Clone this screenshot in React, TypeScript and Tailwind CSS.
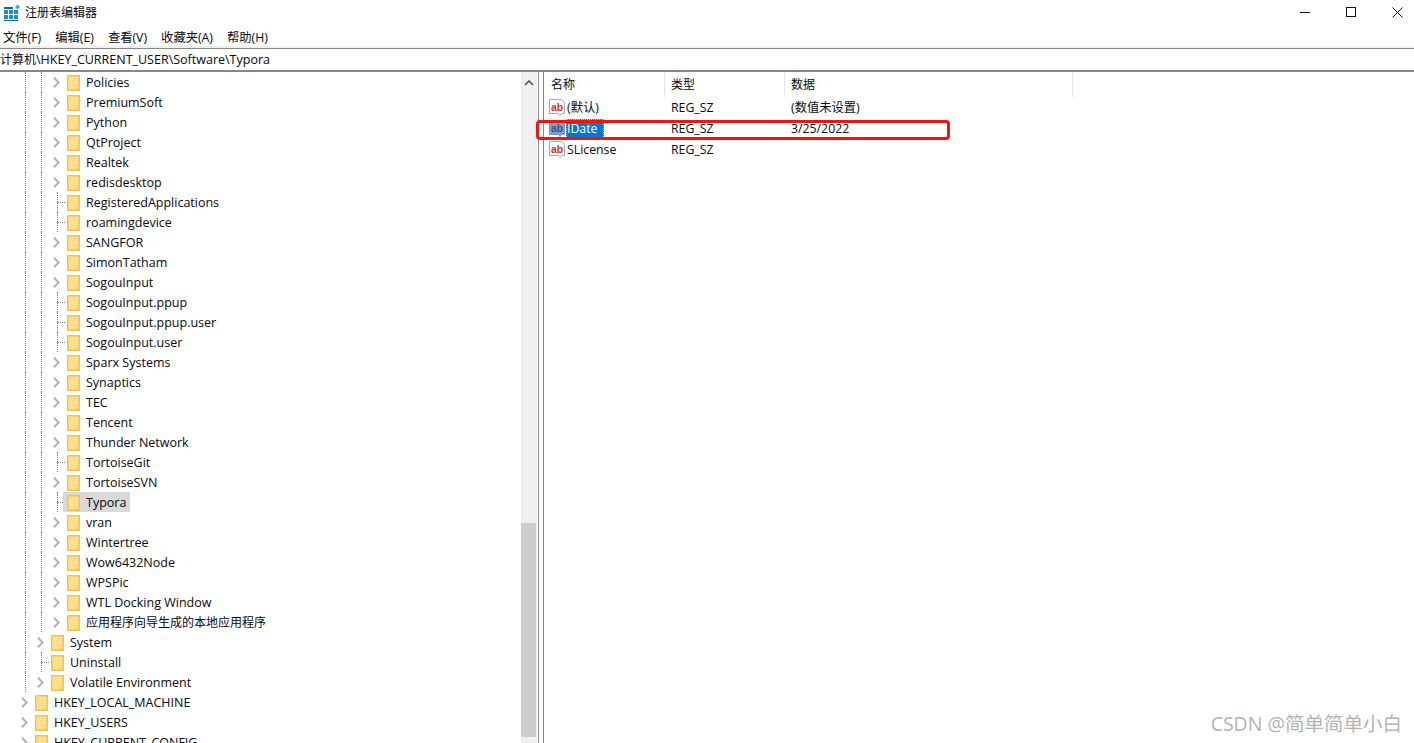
interface TreeRow {
  name: string;
  depth: number;
  leaf?: boolean;
  selected?: boolean;
  last?: boolean;
}

const level3 = [
  'Policies', 'PremiumSoft', 'Python', 'QtProject', 'Realtek', 'redisdesktop',
  '*RegisteredApplications', '*roamingdevice', 'SANGFOR', 'SimonTatham', 'SogouInput',
  '*SogouInput.ppup', '*SogouInput.ppup.user', '*SogouInput.user', 'Sparx Systems',
  'Synaptics', 'TEC', 'Tencent', 'Thunder Network', '*TortoiseGit', 'TortoiseSVN',
  '*Typora', 'vran', 'Wintertree', 'Wow6432Node', 'WPSPic', 'WTL Docking Window',
  '应用程序向导生成的本地应用程序',
];

const rows: TreeRow[] = [
  ...level3.map((n) => ({
    name: n.replace('*', ''),
    depth: 2,
    leaf: n.startsWith('*'),
    selected: n === '*Typora',
    last: n === '应用程序向导生成的本地应用程序',
  })),
  { name: 'System', depth: 1 },
  { name: 'Uninstall', depth: 1, leaf: true },
  { name: 'Volatile Environment', depth: 1, last: true },
  { name: 'HKEY_LOCAL_MACHINE', depth: 0 },
  { name: 'HKEY_USERS', depth: 0 },
  { name: 'HKEY_CURRENT_CONFIG', depth: 0 },
];

const values = [
  { name: '(默认)', type: 'REG_SZ', data: '(数值未设置)' },
  { name: 'IDate', type: 'REG_SZ', data: '3/25/2022', selected: true },
  { name: 'SLicense', type: 'REG_SZ', data: '' },
];

const menus = ['文件(F)', '编辑(E)', '查看(V)', '收藏夹(A)', '帮助(H)'];

function Folder() {
  return (
    <svg width="13" height="16" viewBox="0 0 13 16" className="shrink-0 mt-[2px]">
      <rect x="0.75" y="0.75" width="11.5" height="14.5" fill="#fee08c" stroke="#f0c24e" strokeWidth="1.5" />
      <path d="M10 15v-4h2.5" fill="#fff0c0" stroke="#f0c24e" />
    </svg>
  );
}

function Chevron() {
  return (
    <svg width="7" height="11" viewBox="0 0 7 11">
      <path d="M1 0.8l4.7 4.7-4.7 4.7" fill="none" stroke="#b0b0b0" strokeWidth="2" />
    </svg>
  );
}

function AppIcon() {
  return (
    <svg width="18" height="18" viewBox="0 0 18 18">
      <path d="M1 6h4v4H1zM6 6h4v4H6zM11 6h4v4h-4zM1 11h4v4H1zM6 11h4v4H6zM11 11h4v4h-4z" fill="#1b8fc9" />
      <path d="M1 16h14v1H1zM1 3h9v2H1z" fill="#156a9c" />
      <path d="M14.5 0.5l2.5 2.5-2.5 2.5-2.5-2.5z" fill="#39a9e0" />
    </svg>
  );
}

function AbIcon({ selected }: { selected?: boolean }) {
  const edge = selected ? '#7b98c4' : '#a8a8a8';
  const fill = selected ? '#7f9fd2' : '#ffffff';
  const ink = selected ? '#3f5680' : '#d8321a';
  return (
    <div className="relative w-4 h-[18px] shrink-0">
      <svg width="16" height="18" viewBox="0 0 16 18">
        <path d="M0.5 0.5h12l3 3v11h-3l-1.5 2-1.5-2h-9z" fill={fill} stroke={edge} />
      </svg>
      <span
        className="absolute left-[2px] top-[1px] text-[10.5px] leading-[14px] font-bold font-['Liberation_Sans',sans-serif]"
        style={{ color: ink }}
      >
        ab
      </span>
    </div>
  );
}

// one 16px indent column of the tree, with its dotted guide line
function Guide({ half }: { half?: boolean }) {
  return (
    <div className="w-4 h-5 shrink-0 pl-2">
      <div className={`border-l border-dotted border-[#7a7a7a] ${half ? 'h-2.5' : 'h-5'}`} />
    </div>
  );
}

function Row({ row }: { row: TreeRow }) {
  const cjk = /[^\x00-\x7f]/.test(row.name);
  return (
    <div className="flex items-center h-5 whitespace-nowrap">
      {Array.from({ length: row.depth }).map((_, i) => (
        <Guide key={i} />
      ))}
      <div className="relative w-4 h-5 shrink-0">
        {row.depth > 0 && <Guide half={row.last} />}
        {row.leaf ? (
          <div className="absolute left-2 top-2.5 w-2 border-t border-dotted border-[#7a7a7a]" />
        ) : (
          <div className="absolute inset-0 flex items-center justify-center bg-white pr-[1px]">
            <Chevron />
          </div>
        )}
      </div>
      <div className={`relative flex items-center h-5 -ml-[2px] pl-[4px] pr-[4px] gap-[6px] ${row.selected ? 'bg-[#d9d9d9]' : ''}`}>
        <Folder />
        <span className={cjk ? 'text-xs pt-[2px]' : 'pt-[2px]'}>{row.name}</span>
      </div>
    </div>
  );
}

export default function App() {
  return (
    <div className="relative flex flex-col h-[743px] w-[1414px] overflow-hidden bg-white text-[12.5px] leading-5 text-[#08080f] font-['Open_Sans','Noto_Sans_CJK_SC',sans-serif]">
      <div className="flex items-center h-6 shrink-0">
        <div className="pl-[3px] pr-1 pt-[1px]">
          <AppIcon />
        </div>
        <span className="pt-[2px] text-xs">注册表编辑器</span>
        <div className="ml-auto flex items-center gap-3">
          <div className="w-[34px] flex justify-center">
            <div className="w-[10px] border-t border-[#111]" />
          </div>
          <div className="w-[34px] flex justify-center">
            <div className="w-[10px] h-[10px] border border-[#111]" />
          </div>
          <div className="w-[34px] flex justify-center">
            <svg width="11" height="11" viewBox="0 0 11 11">
              <path d="M0.5 0.5l10 10M10.5 0.5l-10 10" stroke="#111" fill="none" />
            </svg>
          </div>
        </div>
      </div>

      <div className="flex items-center h-[22px] shrink-0 pl-[3px] pt-[6px] gap-[14px] text-[12.3px]">
        {menus.map((m) => (
          <span key={m}>{m}</span>
        ))}
      </div>
      <div className="h-[3px] shrink-0 bg-[#f0f0f0] border-b border-[#888]" />

      <div className="flex items-center h-[23px] shrink-0 border-b-2 border-[#888]">
        <span className="text-xs">计算机</span>\HKEY_CURRENT_USER\Software\Typora
      </div>

      <div className="flex flex-1 min-h-0">
        <div className="flex w-[537px] shrink-0 overflow-hidden">
          <div className="w-[521px] shrink-0 pl-[17px] overflow-hidden">
            {rows.map((r) => (
              <Row key={r.name} row={r} />
            ))}
          </div>
          <div className="flex flex-col w-[16px] shrink-0 h-full bg-[#f0f0f0]">
            <div className="flex justify-center pt-2 h-[451px] shrink-0">
              <svg width="10" height="6" viewBox="0 0 10 6">
                <path d="M1 5l4-4 4 4" fill="none" stroke="#505050" strokeWidth="1.6" />
              </svg>
            </div>
            <div className="h-[214px] w-[15px] bg-[#cdcdcd]" />
          </div>
        </div>

        <div className="w-[6px] shrink-0 border-x border-[#888] ml-[1px]" />

        <div className="flex-1 min-w-0">
          <div className="flex h-[25px] text-xs">
            <div className="w-[121px] pl-[7px] pt-[5px] border-r border-[#e5e5e5]">名称</div>
            <div className="w-[120px] pl-[6px] pt-[5px] border-r border-[#e5e5e5]">类型</div>
            <div className="w-[288px] pl-[6px] pt-[5px] border-r border-[#e5e5e5]">数据</div>
          </div>
          {values.map((v) => (
            <div key={v.name} className="flex items-center h-[21px] text-[12.3px]">
              <div className="flex items-center w-[121px] pl-[5px]">
                <AbIcon selected={v.selected} />
                <span
                  className={`ml-px pl-[1px] pr-[7px] h-[20px] leading-[19px] ${
                    v.selected ? 'bg-[#0078d7] text-white outline-1 outline-dotted outline-[#a8c8e8] -outline-offset-1' : ''
                  }`}
                >
                  {v.name}
                </span>
              </div>
              <div className="w-[120px] pl-[6px]">{v.type}</div>
              <div className="pl-[6px]">{v.data}</div>
            </div>
          ))}
        </div>
      </div>

      <div className="absolute left-[536px] top-[120px] w-[414px] h-[20px] rounded-[4px] border-[3px] border-[#f0140f]" />
      <div className="absolute right-[12px] top-[712px] text-[19.5px] leading-6 text-[#b4b4b4]">CSDN @简单简单小白</div>
    </div>
  );
}
